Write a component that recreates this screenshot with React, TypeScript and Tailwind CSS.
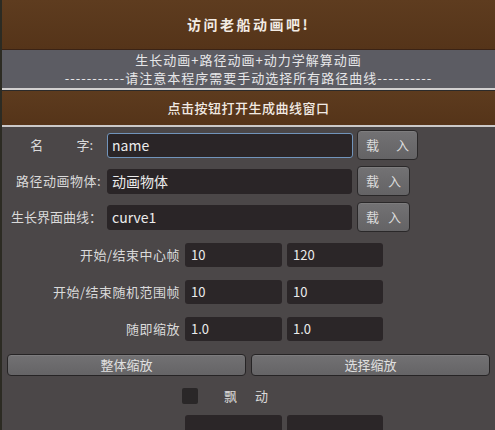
import React from "react";

const font = { fontFamily: '"Noto Sans CJK SC", "Noto Sans", sans-serif' };

function LoadBtn({ w }: { w: string }) {
  return (
    <div
      className={`${w} h-[30px] flex items-center justify-between px-[8px] rounded-[4px] border border-[#2a2829] bg-gradient-to-b from-[#737274] to-[#646365] text-[13px] text-[#dcdcdc] shadow-[inset_0_1px_0_rgba(255,255,255,0.08)]`}
    >
      <span>载</span>
      <span>入</span>
    </div>
  );
}

function Field({ value, w, focus }: { value: string; w: string; focus?: boolean }) {
  return (
    <div
      className={`${w} h-[25px] flex items-center px-[4px] rounded-[3px] bg-[#2a2527] text-[14px] text-[#ececec] ${
        focus ? "border-[1.5px] border-[#7194bb]" : "border border-[#2a2527]"
      }`}
    >
      {value}
    </div>
  );
}

function SmallField({ value, w }: { value: string; w: string }) {
  return (
    <div
      className={`${w} h-[24px] flex items-center pl-[6px] rounded-[3px] bg-[#2b2628] text-[13px] text-[#ececec]`}
    >
      {value}
    </div>
  );
}

export default function App() {
  return (
    <div
      style={font}
      className="w-[495px] h-[430px] overflow-hidden bg-[#4b4748] border-l-2 border-[#2c2b23] flex flex-col"
    >
      <div className="h-[50px] shrink-0 bg-gradient-to-b from-[#5e3c1f] to-[#553419] border-b border-[#3b2315] flex items-center justify-center">
        <span className="text-[14px] font-bold tracking-[2.5px] text-[#f2ebe4]">访问老船动画吧!</span>
      </div>
      <div className="h-[38px] shrink-0 bg-[#5c5c63] flex flex-col items-center justify-center text-[13px] leading-[18px] tracking-[1px] text-[#e6e6e8]">
        <div>生长动画+路径动画+动力学解算动画</div>
        <div className="whitespace-nowrap">-----------请注意本程序需要手动选择所有路径曲线----------</div>
      </div>
      <div className="h-[2px] shrink-0 bg-[#d2d0d0]" />
      <div className="h-[1px] shrink-0 bg-[#2b2a2a]" />
      <div className="h-[34px] shrink-0 bg-gradient-to-b from-[#5d3b1e] to-[#553419] flex items-center justify-center">
        <span className="text-[13px] tracking-[0.5px] text-[#f2ebe4] font-medium">点击按钮打开生成曲线窗口</span>
      </div>
      <div className="h-[2px] shrink-0 bg-[#cbc9c9]" />

      <div className="flex flex-col gap-[6px] pt-[3px] text-[13px] text-[#dadada]">
        <div className="h-[30px] flex items-center">
          <div className="w-[105px] flex justify-end pr-[14px]">
            <span className="mr-[33px]">名</span>
            <span>字:</span>
          </div>
          <Field value="name" w="w-[246px]" focus />
          <div className="w-[4px]" />
          <LoadBtn w="w-[61px]" />
        </div>
        <div className="h-[30px] flex items-center">
          <div className="w-[105px] text-right pr-[6px] tracking-[0.5px]">路径动画物体:</div>
          <Field value="动画物体" w="w-[245px]" />
          <div className="w-[5px]" />
          <LoadBtn w="w-[53px]" />
        </div>
        <div className="h-[30px] flex items-center">
          <div className="w-[105px] text-right pr-[5px]">生长界面曲线：</div>
          <Field value="curve1" w="w-[245px]" />
          <div className="w-[5px]" />
          <LoadBtn w="w-[53px]" />
        </div>
      </div>

      <div className="flex flex-col gap-[13px] mt-[11px] text-[13px] text-[#dadada]">
        {[
          ["开始/结束中心帧", "10", "120"],
          ["开始/结束随机范围帧", "10", "10"],
          ["随即缩放", "1.0", "1.0"],
        ].map(([l, a, b]) => (
          <div key={l} className="h-[24px] flex items-center">
            <div className="w-[179px] text-right pr-[1px] tracking-[0.5px]">{l}</div>
            <div className="w-[4px]" />
            <SmallField value={a} w="w-[97px]" />
            <div className="w-[5px]" />
            <SmallField value={b} w="w-[96px]" />
          </div>
        ))}
      </div>

      <div className="flex gap-[5px] px-[5px] mt-[13px] h-[31px] text-[13px] text-[#e0e0e0]">
        <div className="flex-1 flex items-center justify-center rounded-[4px] border border-[#262425] bg-gradient-to-b from-[#727173] to-[#656466] shadow-[inset_0_1px_0_rgba(255,255,255,0.08)]">
          整体缩放
        </div>
        <div className="flex-1 flex items-center justify-center rounded-[4px] border border-[#262425] bg-gradient-to-b from-[#727173] to-[#656466] shadow-[inset_0_1px_0_rgba(255,255,255,0.08)]">
          选择缩放
        </div>
      </div>

      <div className="flex items-center mt-[12px] h-[16px] text-[13px] text-[#dadada]">
        <div className="w-[180px]" />
        <div className="w-[16px] h-[16px] rounded-[2px] bg-[#2a2728]" />
        <div className="w-[26px]" />
        <span className="mr-[18px]">飘</span>
        <span>动</span>
      </div>

      <div className="flex mt-[11px] h-[24px]">
        <div className="w-[183px]" />
        <div className="w-[97px] h-[24px] rounded-[3px] bg-[#2b2628]" />
        <div className="w-[5px]" />
        <div className="w-[96px] h-[24px] rounded-[3px] bg-[#2b2628]" />
      </div>
    </div>
  );
}
